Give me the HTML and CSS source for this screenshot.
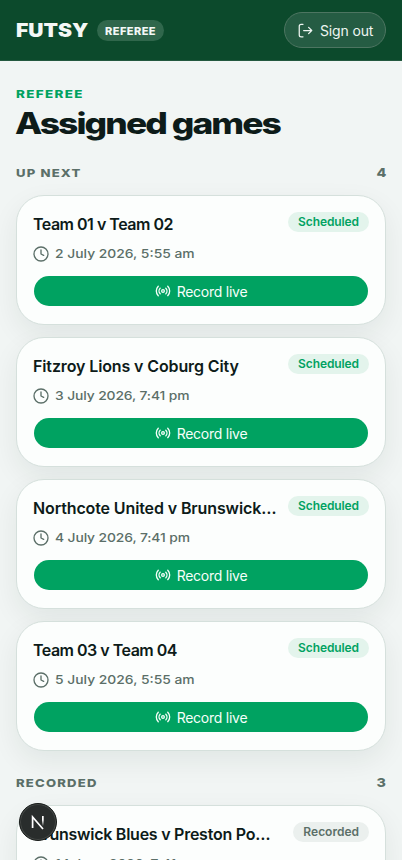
FILE: index.html
```html
<!DOCTYPE html>
<html lang="en-AU">
<head>
<meta charset="utf-8">
<meta name="viewport" content="width=device-width, initial-scale=1">
<title>Futsy Referee</title>
<link rel="stylesheet" href="styles.css">
</head>
<body>
<svg class="sprite" width="0" height="0">
  <symbol id="clock" viewBox="0 0 24 24"><circle cx="12" cy="12" r="10.5"/><path d="M12 6v6l4 2"/></symbol>
  <symbol id="radio" viewBox="0 0 24 24"><path d="M4.9 19.1C1 15.2 1 8.8 4.9 4.9M7.8 16.2c-2.3-2.3-2.3-6.1 0-8.5M16.2 7.8c2.3 2.3 2.3 6.1 0 8.5M19.1 4.9C23 8.8 23 15.1 19.1 19"/><circle cx="12" cy="12" r="2"/></symbol>
</svg>
<header class="topbar">
  <div class="brand"><span class="logo"><span class="wide">FUTSY</span></span><span class="role">REFEREE</span></div>
  <button class="signout"><svg class="icon" viewBox="0 0 24 24"><path d="M8 22H5a3 3 0 0 1-3-3V5a3 3 0 0 1 3-3h3M17 17l5-5-5-5M22 12H9"/></svg><span>Sign out</span></button>
</header>
<main>
  <p class="eyebrow"><span class="wide">REFEREE</span></p>
  <h1><span class="wide">Assigned games</span></h1>
  <section>
    <div class="section-head"><span class="wide">UP NEXT</span><span class="wide count">4</span></div>
    <div class="cards">
      <article class="card">
        <div class="row"><h2 class="numbered">Team 01 v Team 02</h2><span class="badge">Scheduled</span></div>
        <div class="date"><svg class="icon"><use href="#clock"/></svg><span class="wide">2 July 2026, 5:55 am</span></div>
        <button class="record"><svg class="icon"><use href="#radio"/></svg><span>Record live</span></button>
      </article>
      <article class="card">
        <div class="row"><h2>Fitzroy Lions v Coburg City</h2><span class="badge">Scheduled</span></div>
        <div class="date"><svg class="icon"><use href="#clock"/></svg><span class="wide evening">3 July 2026, 7:41 pm</span></div>
        <button class="record"><svg class="icon"><use href="#radio"/></svg><span>Record live</span></button>
      </article>
      <article class="card">
        <div class="row"><h2>Northcote United v Brunswick…</h2><span class="badge">Scheduled</span></div>
        <div class="date"><svg class="icon"><use href="#clock"/></svg><span class="wide evening">4 July 2026, 7:41 pm</span></div>
        <button class="record"><svg class="icon"><use href="#radio"/></svg><span>Record live</span></button>
      </article>
      <article class="card">
        <div class="row"><h2 class="numbered">Team 03 v Team 04</h2><span class="badge">Scheduled</span></div>
        <div class="date"><svg class="icon"><use href="#clock"/></svg><span class="wide">5 July 2026, 5:55 am</span></div>
        <button class="record"><svg class="icon"><use href="#radio"/></svg><span>Record live</span></button>
      </article>
    </div>
  </section>
  <section class="recorded">
    <div class="section-head"><span class="wide">RECORDED</span><span class="wide count">3</span></div>
    <div class="cards">
      <article class="card">
        <div class="row"><h2 class="tight">Brunswick Blues v Preston Po…</h2><span class="badge muted">Recorded</span></div>
        <div class="date"><svg class="icon"><use href="#clock"/></svg><span class="wide evening">14 June 2026, 7:41 pm</span></div>
      </article>
    </div>
  </section>
</main>
<div class="devtools"><svg viewBox="0 0 36 36"><defs><linearGradient id="ng" x1="0" y1="0" x2="0" y2="1"><stop offset=".4" stop-color="#fff"/><stop offset="1" stop-color="#fff" stop-opacity="0"/></linearGradient></defs><path d="M12.6 24V13L23 25" fill="none" stroke="#fff" stroke-width="1.7"/><rect x="22" y="12" width="1.7" height="10" fill="url(#ng)"/></svg></div>
</body>
</html>
```
FILE: styles.css
```css
* { box-sizing: border-box; }
html, body { height: 100%; overflow: hidden; }
body { margin: 0; font-family: Inter, "Liberation Sans", sans-serif; color: #0d1b19; background: #f1f5f4; }
.sprite { position: absolute; }
p, h1, h2 { margin: 0; }
button { font: inherit; cursor: pointer; }
.icon { fill: none; stroke: currentColor; stroke-width: 2; stroke-linecap: round; stroke-linejoin: round; flex: none; }
.wide { display: inline-block; transform-origin: left center; white-space: nowrap; }
.topbar { height: 61px; padding: 0 16px; display: flex; align-items: center; justify-content: space-between; background: #0c4a2c; border-bottom: 1px solid #24593f; }
.brand { display: flex; align-items: center; }
.logo { width: 81px; font-size: 18.5px; font-weight: 900; color: #f4f8f6; line-height: 24px; }
.logo .wide { transform: scaleX(1.14); }
.role { height: 21px; padding: 0 8px; border-radius: 11px; background: #30674c; color: #f4f8f6; font-size: 11px; font-weight: 800; line-height: 22px; letter-spacing: .45px; width: 67px; white-space: nowrap; }
.signout { height: 36px; width: 102px; padding: 0 0 0 13px; display: flex; align-items: center; gap: 7px; border: 1px solid #4d7561; border-radius: 18px; background: #255c43; color: #eef5f1; font-size: 14px; letter-spacing: -.15px; white-space: nowrap; }
.signout .icon { width: 15px; height: 15px; }
main { padding: 24px 16px 0; }
.eyebrow { height: 18px; font-size: 11px; line-height: 18px; font-weight: 800; letter-spacing: 1.1px; color: #00a261; }
.eyebrow .wide { transform: scaleX(1.22); }
h1 { height: 40px; font-size: 29.5px; line-height: 40px; font-weight: 800; letter-spacing: -1.6px; }
h1 .wide { transform: translateX(-1px) scaleX(1.2); }
.section-head { display: flex; justify-content: space-between; margin-top: 22px; height: 16px; font-size: 11px; line-height: 16px; font-weight: 800; letter-spacing: 1px; color: #5b6f68; }
.section-head .wide { transform: scaleX(1.19); }
.section-head .count { transform-origin: right center; letter-spacing: 0; font-size: 12px; }
.cards { margin-top: 14px; display: grid; gap: 12px; }
.card { height: 130px; padding: 15px 16px; border: 1px solid #d5e0dc; border-radius: 28px; background: #fcfefd; box-shadow: 0 10px 28px rgba(13, 40, 30, .07); }
.row { display: flex; justify-content: space-between; height: 25px; }
h2 { font-size: 16px; line-height: 26px; font-weight: 600; letter-spacing: -.12px; white-space: nowrap; }
.numbered { letter-spacing: -.5px; }
.tight { letter-spacing: -.25px; }
.badge { height: 20px; margin-top: .5px; padding: 0 10px; border-radius: 10px; background: #e3f4ec; color: #00a261; font-size: 12px; font-weight: 600; letter-spacing: -.1px; line-height: 20px; }
.muted { background: #ebf0ee; color: #5b6f68; letter-spacing: 0; }
.date { height: 20px; margin-top: 7.5px; display: flex; align-items: center; gap: 6px; font-size: 12px; font-weight: 500; color: #5b6f68; }
.date .icon { width: 16px; height: 16px; }
.date .wide { transform: scaleX(1.155); }
.date .evening { letter-spacing: -.1px; }
.record { width: calc(100% - 2px); height: 30px; margin: 12.5px 1px 0; padding: 0; display: flex; justify-content: center; align-items: center; gap: 6px; border: 0; border-radius: 15px; background: #00a261; color: #f6fffa; font-size: 14px; letter-spacing: -.25px; }
.record .icon { width: 16px; height: 16px; }
.recorded .section-head { margin-top: 24px; }
.devtools { position: fixed; left: 19px; top: 803px; width: 38px; height: 38px; border-radius: 50%; background: #292d2c; border: 1px solid #171b19; box-shadow: inset 0 0 0 1px #444846; }
.devtools svg { display: block; width: 36px; height: 36px; }
```
